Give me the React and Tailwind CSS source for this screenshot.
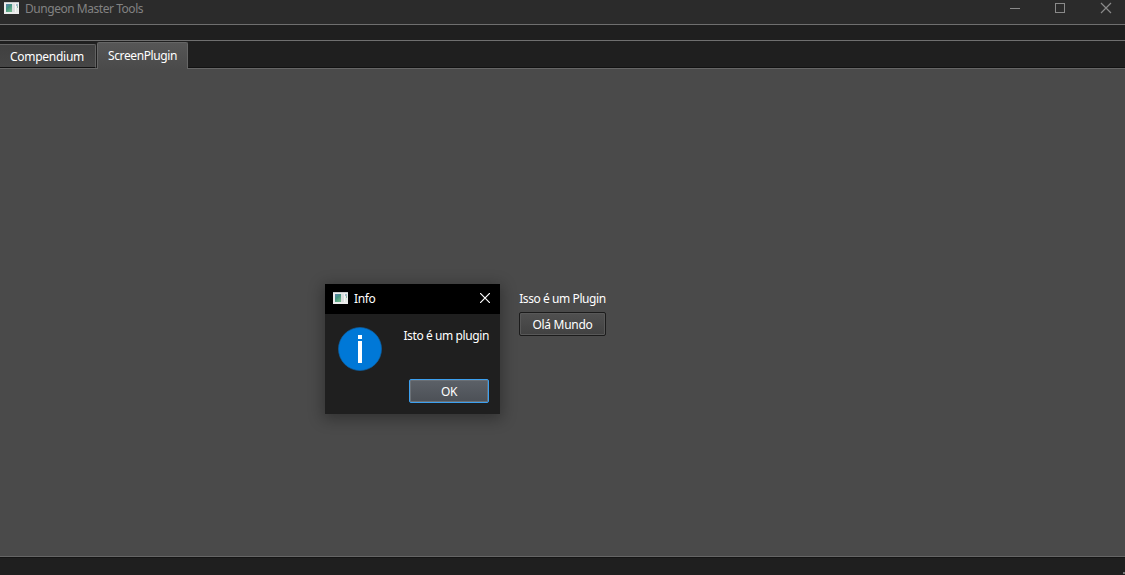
function AppIcon() {
  return (
    <svg width="15" height="12" viewBox="0 0 15 12" shapeRendering="crispEdges" className="shrink-0">
      <defs>
        <linearGradient id="thumb" x1="0" y1="0" x2="0.6" y2="1">
          <stop offset="0" stopColor="#5b80b0" />
          <stop offset="0.5" stopColor="#43917f" />
          <stop offset="1" stopColor="#6fb58c" />
        </linearGradient>
      </defs>
      <rect width="15" height="12" fill="#ececec" />
      <rect width="15" height="1" fill="#c9cbcd" />
      <rect x="2" y="2" width="6" height="8" fill="url(#thumb)" />
      <rect x="8" y="2" width="3" height="8" fill="#dcdfdf" />
      <rect x="11" y="2" width="1" height="8" fill="#f6f6f6" />
      <rect x="12" y="2" width="2" height="2" fill="#9fb9c8" />
      <rect x="13" y="4" width="1" height="2" fill="#8dbba6" />
      <rect x="12" y="6" width="2" height="4" fill="#e4ebe6" />
    </svg>
  );
}

function TitleBar() {
  return (
    <header className="flex h-6 shrink-0 bg-[#2b2b2b] pl-1 text-[#828282]">
      <div className="flex h-[18px] flex-1 items-start pt-[2px]">
        <AppIcon />
        <span className="ml-[6px] -mt-px text-[12px] leading-4 tracking-[-0.46px]">Dungeon Master Tools</span>
      </div>
      <svg width="125" height="18" viewBox="0 0 125 18" fill="none" stroke="#8a8a8a">
        <path d="M10 8.5h10M55.5 3.5h9v9h-9z" shapeRendering="crispEdges" />
        <path d="M101 3l10 10M111 3l-10 10" strokeWidth="1.2" />
      </svg>
    </header>
  );
}

function Tabs() {
  return (
    <nav className="flex h-[27px] shrink-0 items-end bg-[#1f1f1f]">
      <div className="flex h-6 w-24 justify-center rounded-tr-[2px] border border-l-0 border-[#626262] border-b-[#111] bg-linear-to-b from-[#404040] to-[#464646] pr-[1px] text-[12px] leading-6 tracking-[-0.27px] text-white">
        Compendium
      </div>
      <div className="relative -mb-px ml-[1px] flex h-[27px] w-[91px] justify-center rounded-t-[2px] border border-b-0 border-[#666] bg-linear-to-b from-[#565656] to-[#4a4a4a] text-[12px] leading-[26px] tracking-[-0.4px] text-white">
        ScreenPlugin
      </div>
      <div className="h-full flex-1 border-b border-[#121212]" />
    </nav>
  );
}

function InfoDialog() {
  return (
    <div className="absolute left-[325px] top-[284px] flex h-[130px] w-[175px] flex-col bg-[#1f1f1f] text-[12px] text-white shadow-[0_3px_14px_2px_rgba(0,0,0,0.32)]">
      <div className="flex h-[30px] items-center bg-black pl-2 pr-[10px]">
        <div className="-mt-[2px]">
          <AppIcon />
        </div>
        <span className="ml-[6px] flex-1 leading-4 tracking-[-0.4px]">Info</span>
        <svg width="10" height="10" viewBox="0 0 10 10" stroke="#fff" strokeWidth="1.2" className="-mt-[2px]">
          <path d="M0 0l10 10M10 0L0 10" />
        </svg>
      </div>
      <div className="flex justify-between pl-[13px] pr-[11px] pt-[13px]">
        <svg width="44" height="44" viewBox="0 0 44 44">
          <circle cx="22" cy="22" r="21.5" fill="#0078d7" stroke="#0f61a4" strokeWidth="0.7" />
          <path d="M20 8h4v4h-4zM20 14h4v22h-4z" fill="#fff" shapeRendering="crispEdges" />
        </svg>
        <span className="leading-[18px] tracking-[-0.4px]">Isto é um plugin</span>
      </div>
      <button className="ml-auto mr-[11px] mt-2 h-6 w-20 rounded-[2px] border border-[#3ca0f0] bg-linear-to-b from-[#5c6168] to-[#4c5056] pt-px leading-[22px] tracking-[-0.4px] shadow-[inset_0_0_0_1px_#6b7076]">
        OK
      </button>
    </div>
  );
}

export default function App() {
  return (
    <div className="relative flex h-[575px] w-[1125px] flex-col overflow-hidden bg-[#1f1f1f] font-['Noto_Sans','Open_Sans',sans-serif]">
      <TitleBar />
      <div className="h-[17px] shrink-0 border-y border-[#6f6f6f] bg-[#1f1f1f]" />
      <Tabs />
      <main className="flex flex-1 flex-col items-center border-y border-[#666] bg-[#4a4a4a] pt-[221px] text-[12px] text-white">
        <span className="leading-[18px] tracking-[-0.42px]">Isso é um Plugin</span>
        <button className="mt-1 h-6 w-[87px] rounded-[2px] border border-[#1b1b1b] bg-linear-to-b from-[#505050] to-[#414141] pt-px leading-[22px] tracking-[-0.3px] shadow-[inset_0_0_0_1px_#585858]">
          Olá Mundo
        </button>
      </main>
      <footer className="flex h-[18px] shrink-0 items-end justify-end border-t border-[#151515] bg-[#1f1f1f]">
        <div className="mb-[1px] h-[2px] w-[2px] bg-[#777]" />
      </footer>
      <InfoDialog />
    </div>
  );
}
